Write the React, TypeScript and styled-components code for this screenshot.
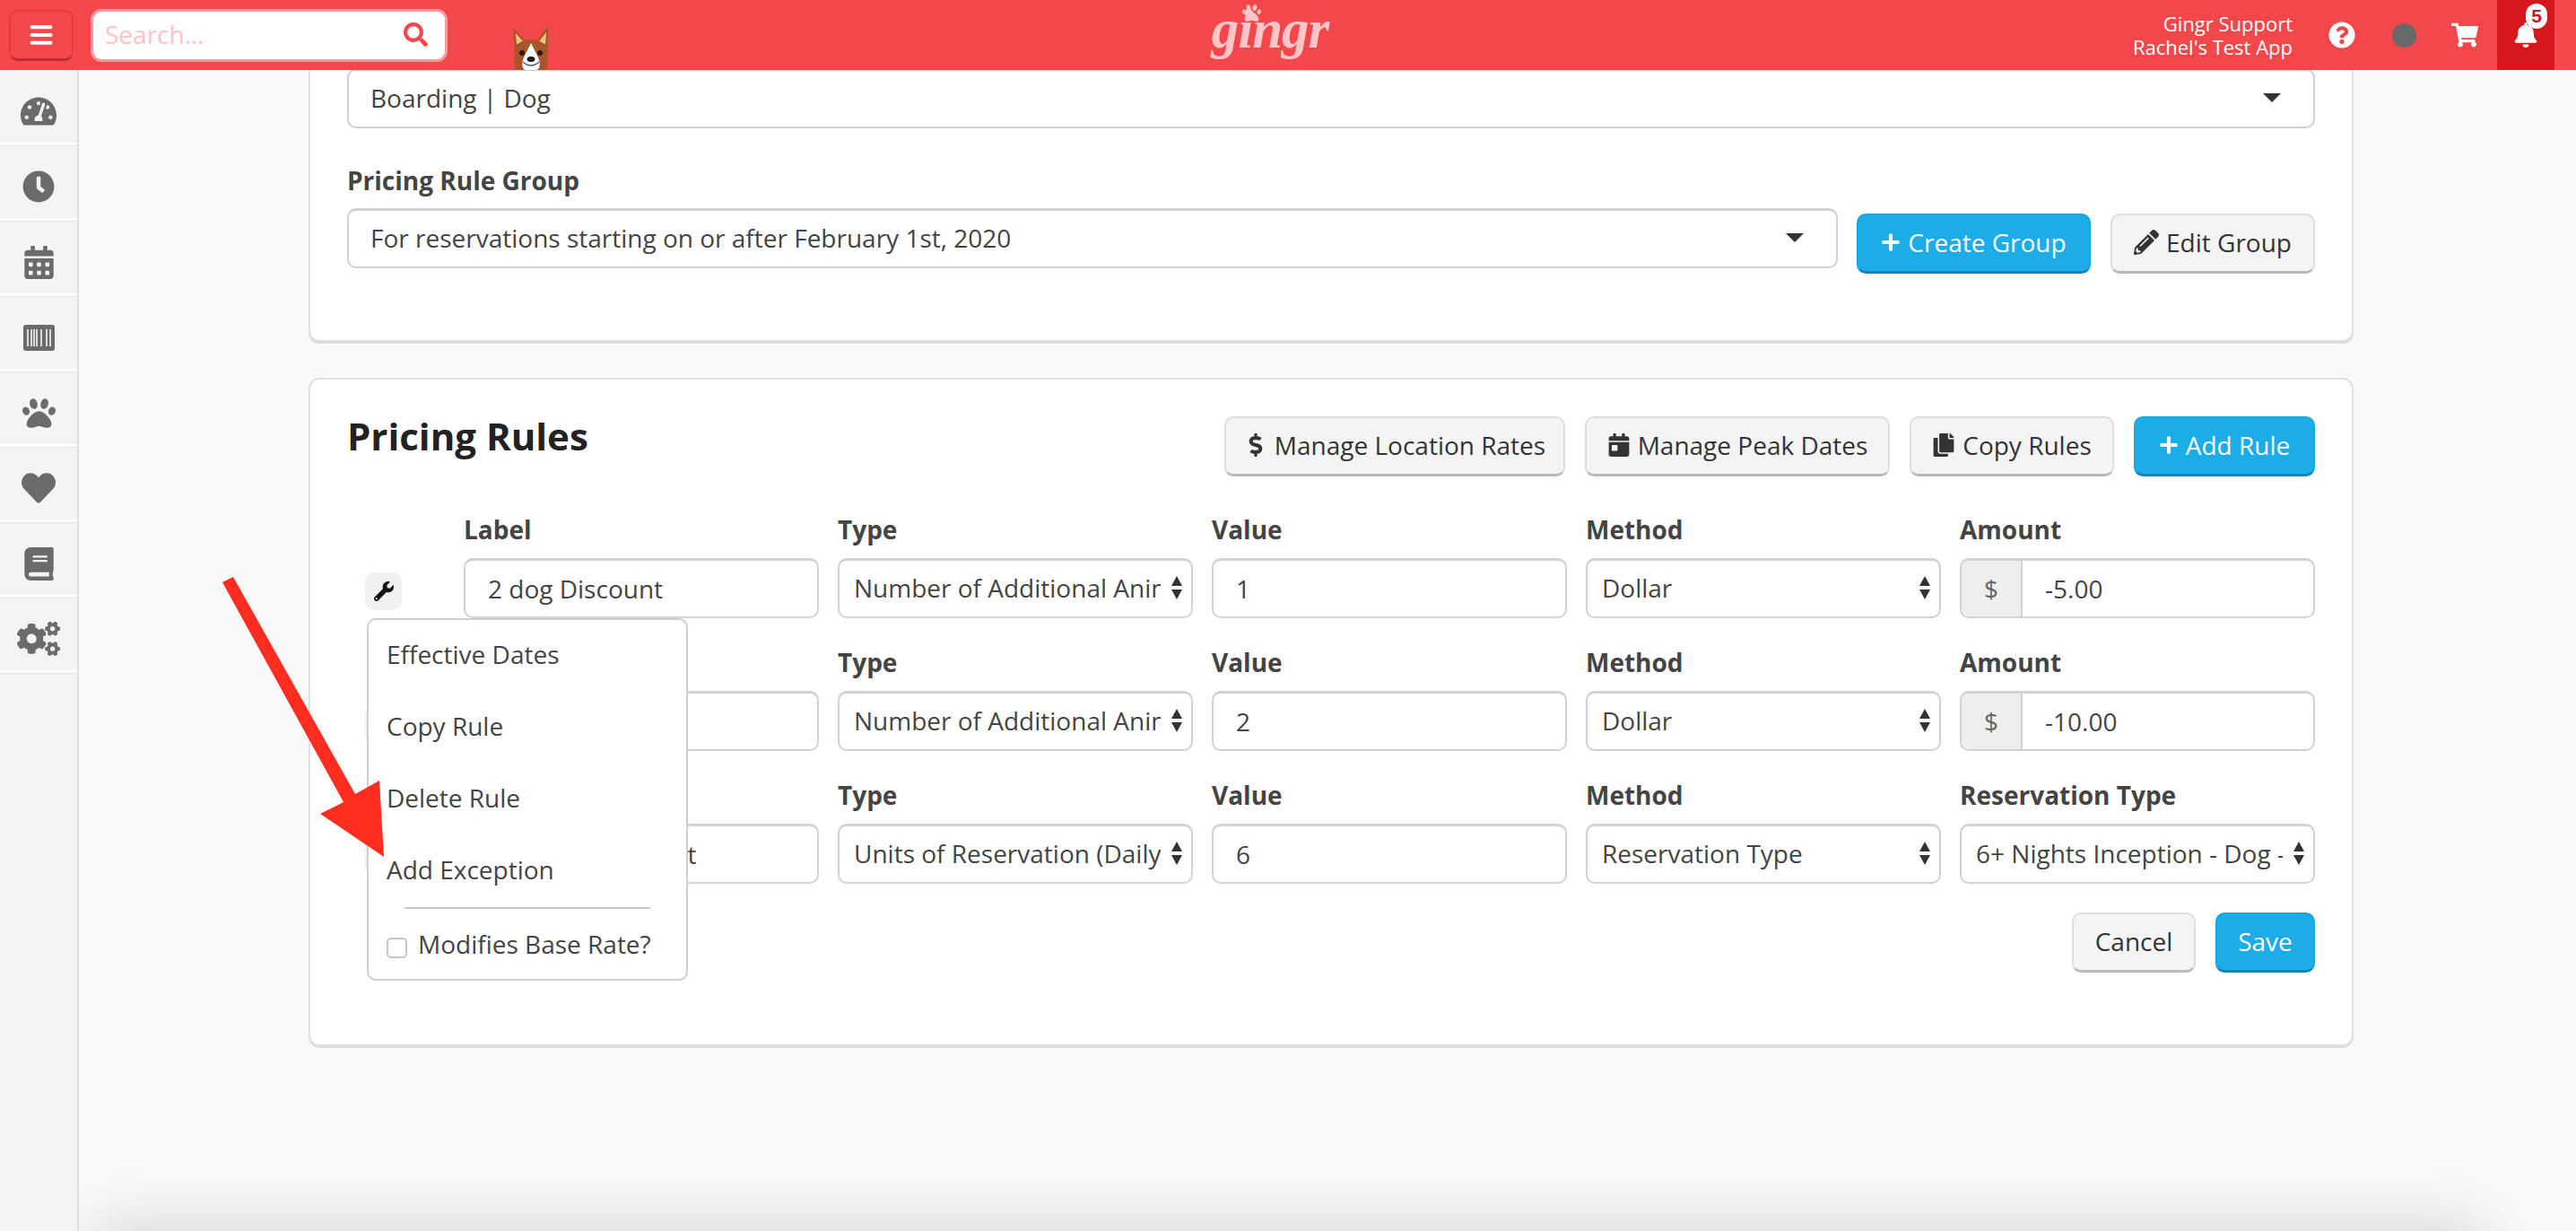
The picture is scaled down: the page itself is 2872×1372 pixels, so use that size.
import styled, { createGlobalStyle } from "styled-components";
import {
  FaBars,
  FaBell,
  FaBook,
  FaCalendarAlt,
  FaCalendarDay,
  FaClock,
  FaCogs,
  FaCopy,
  FaDollarSign,
  FaHeart,
  FaPaw,
  FaPencilAlt,
  FaPlus,
  FaQuestionCircle,
  FaSearch,
  FaShoppingCart,
  FaTachometerAlt,
  FaWrench,
} from "react-icons/fa";

const GlobalStyle = createGlobalStyle`
  html, body {
    margin: 0;
    padding: 0;
    height: 100%;
    overflow: hidden;
  }
  body {
    font-family: "Open Sans", "Liberation Sans", sans-serif;
    font-size: 28px;
    color: #444;
    background: #fafafa;
  }
  * { box-sizing: border-box; }
`;

const Page = styled.div`
  display: flex;
  flex-direction: column;
  height: 100vh;
  overflow: hidden;
  position: relative;
`;

const TopBar = styled.header`
  flex: 0 0 78px;
  display: flex;
  align-items: center;
  background: #f4474b;
  position: relative;
  z-index: 2;
`;

const MenuButton = styled.button`
  width: 72px;
  height: 57px;
  margin: 0 0 0 10px;
  padding: 0;
  display: flex;
  align-items: center;
  justify-content: center;
  background: #f4474b;
  color: #fff;
  border: 2px solid #e23c40;
  border-bottom: 3px solid #b92f33;
  border-radius: 10px;
`;

const SearchBox = styled.div`
  width: 398px;
  height: 59px;
  margin-left: 19px;
  padding: 0 19px 2px 13px;
  display: flex;
  align-items: center;
  justify-content: space-between;
  background: #fff;
  border: 3px solid #fb9a9d;
  border-radius: 12px;
  font-size: 28px;
  color: #ffc3c5;
`;

const DogSlot = styled.div`
  width: 44px;
  height: 50px;
  margin: 28px 0 0 71px;
`;

const Logo = styled.div`
  position: relative;
  margin-left: 736px;
  width: 132px;
  height: 78px;
  font-family: "Liberation Serif", serif;
  font-style: italic;
  font-weight: 700;
  font-size: 61px;
  line-height: 66px;
  color: #ffc5c7;
  text-align: center;
  letter-spacing: -1px;
`;

const LogoPaw = styled.span`
  position: absolute;
  left: 35px;
  top: 4px;
  font-size: 21px;
  line-height: 1;
`;

const UserBlock = styled.div`
  margin-left: auto;
  text-align: right;
  color: #fff;
  font-size: 22px;
  line-height: 26px;
`;

const TopIcon = styled.div<{ $left: number; $width: number }>`
  margin-left: ${(p) => p.$left}px;
  width: ${(p) => p.$width}px;
  display: flex;
  justify-content: center;
  color: #fff;
`;

const StatusDot = styled.div`
  width: 27px;
  height: 27px;
  margin-left: 41px;
  border-radius: 50%;
  background: #686868;
`;

const NotifyCell = styled.div`
  position: relative;
  width: 64px;
  height: 78px;
  margin: 0 24px 0 20px;
  display: flex;
  align-items: center;
  justify-content: center;
  background: #d5181e;
  color: #fff;
`;

const NotifyBadge = styled.span`
  position: absolute;
  left: 32px;
  top: 4px;
  width: 24px;
  height: 28px;
  border-radius: 12px;
  background: #fff;
  color: #c4161c;
  font-family: "Liberation Sans", sans-serif;
  font-weight: 700;
  font-size: 21px;
  line-height: 28px;
  text-align: center;
`;

const Body = styled.div`
  flex: 1;
  display: flex;
  min-height: 0;
`;

const Sidebar = styled.nav`
  flex: 0 0 88px;
  background: #f4f4f4;
  border-right: 2px solid #dedede;
`;

const SideItem = styled.div`
  height: 84px;
  padding-top: 11px;
  display: flex;
  align-items: center;
  justify-content: center;
  color: #6b6b6b;
  border-bottom: 3px solid #fff;
  box-shadow: 0 1px 0 #e4e4e4;
`;

const Main = styled.main`
  flex: 1;
  position: relative;
  overflow: hidden;
  padding-left: 256px;
  background: #fafafa;
`;

const Card = styled.section<{ $first?: boolean }>`
  width: 2280px;
  margin-top: ${(p) => (p.$first ? "-34px" : "40px")};
  padding: ${(p) => (p.$first ? "30px 41px 74px" : "41px 41px 80px")};
  background: #fff;
  border: 2px solid #e0e0e0;
  border-radius: 12px;
  box-shadow: 0 2px 0 #dcdcdc;
`;

const Box = styled.div`
  height: 67px;
  display: flex;
  align-items: center;
  background: #fff;
  border: 2px solid #d2d2d2;
  border-top-width: 3px;
  border-radius: 10px;
  color: #444;
  white-space: nowrap;
  overflow: hidden;
`;

const WideSelect = styled(Box)`
  flex: 1;
  padding: 0 36px 3px 24px;
  justify-content: space-between;
`;

const GroupLabel = styled.div`
  margin-top: 40px;
  height: 49px;
  font-weight: 700;
  line-height: 36px;
  color: #444;
`;

const GroupRow = styled.div`
  display: flex;
  gap: 21px;
`;

const ButtonRow = styled.div<{ $nudge?: number }>`
  display: flex;
  gap: 22px;
  padding-top: ${(p) => p.$nudge ?? 0}px;
`;

const Button = styled.button<{ $primary?: boolean; $width: number }>`
  width: ${(p) => p.$width}px;
  height: 67px;
  padding: 0 0 3px;
  display: flex;
  align-items: center;
  justify-content: center;
  gap: 8px;
  font-family: inherit;
  font-size: 28px;
  white-space: nowrap;
  color: ${(p) => (p.$primary ? "#fff" : "#333")};
  background: ${(p) => (p.$primary ? "#1cace8" : "#f4f4f4")};
  border: 2px solid ${(p) => (p.$primary ? "#1ca6df" : "#dedede")};
  border-bottom: 3px solid ${(p) => (p.$primary ? "#1487b8" : "#b9b9b9")};
  border-radius: 10px;
`;

const RulesHead = styled.div`
  display: flex;
  align-items: flex-start;
  justify-content: space-between;
  margin-bottom: 43px;
`;

const Title = styled.h2`
  margin: 0;
  font-size: 42px;
  line-height: 44px;
  font-weight: 700;
  color: #222;
`;

const RuleList = styled.div`
  display: flex;
  flex-direction: column;
  gap: 33px;
`;

const RuleRow = styled.div`
  position: relative;
  display: grid;
  grid-template-columns: 109px repeat(5, 396px);
  column-gap: 21px;
  align-items: end;
`;

const WrenchButton = styled.div`
  width: 41px;
  height: 42px;
  margin: 0 0 9px 20px;
  display: flex;
  align-items: center;
  justify-content: center;
  background: #f1f1f1;
  border-radius: 10px;
  color: #111;
`;

const Field = styled.div`
  display: flex;
  flex-direction: column;
  gap: 10px;
`;

const FieldLabel = styled.div`
  height: 38px;
  font-weight: 700;
  font-size: 28px;
  line-height: 33px;
  color: #444;
`;

const TextInput = styled(Box)`
  padding-left: 25px;
`;

const SelectBox = styled(Box)`
  position: relative;
  padding: 0 34px 3px 16px;
`;

const SelectText = styled.span`
  flex: 1;
  min-width: 0;
  overflow: hidden;
`;

const SelectArrows = styled.svg`
  position: absolute;
  right: 9px;
  top: 17px;
`;

const AmountBox = styled(Box)`
  padding-right: 20px;
`;

const Addon = styled.span`
  flex: 0 0 68px;
  align-self: stretch;
  display: flex;
  align-items: center;
  justify-content: center;
  margin-right: 25px;
  background: #eee;
  border-right: 2px solid #d2d2d2;
  color: #666;
`;

const FormActions = styled.div`
  display: flex;
  justify-content: flex-end;
  margin-top: 32px;
`;

const RuleMenu = styled.div`
  position: absolute;
  left: 22px;
  top: 115px;
  z-index: 1;
  width: 358px;
  height: 404px;
  padding: 0 20px;
  background: #fff;
  border: 2px solid #cfcfcf;
  border-radius: 10px;
`;

const MenuItem = styled.div`
  height: 80px;
  padding-bottom: 4px;
  display: flex;
  align-items: center;
  color: #444;
`;

const MenuDivider = styled.div`
  height: 2px;
  margin: 0 20px 0 20px;
  background: #c9c9c9;
`;

const CheckRow = styled.label`
  display: flex;
  align-items: center;
  gap: 12px;
  height: 78px;
  color: #444;
`;

const CheckBox = styled.span`
  flex: 0 0 23px;
  height: 23px;
  margin-top: 8px;
  background: #fff;
  border: 2px solid #c6c6c6;
  border-radius: 5px;
`;

const BottomShade = styled.div`
  position: absolute;
  left: 24px;
  right: 110px;
  bottom: -50px;
  height: 50px;
  box-shadow: 0 0 70px 10px rgba(0, 0, 0, 0.14);
`;

const Annotation = styled.svg`
  position: absolute;
  left: 0;
  top: 0;
  z-index: 3;
  pointer-events: none;
`;

function UpDown() {
  return (
    <SelectArrows width="14" height="26" viewBox="0 0 14 26">
      <path d="M7 0 L13 11 H1 Z M1 15 H13 L7 26 Z" fill="#333" />
    </SelectArrows>
  );
}

function Caret() {
  return (
    <svg width="20" height="10" viewBox="0 0 20 10">
      <path d="M0 0 H20 L10 10 Z" fill="#333" />
    </svg>
  );
}

function BarcodeIcon() {
  return (
    <svg width="35" height="29" viewBox="0 0 35 29">
      <rect width="35" height="29" rx="3" fill="#6b6b6b" />
      <path d="M5 5 V24 M9 5 V24 M12 5 V24 M15 5 V24 M20 5 V24 M26 5 V24 M30 5 V24" stroke="#f4f4f4" strokeWidth="1.6" />
    </svg>
  );
}

function DogHead() {
  return (
    <svg width="44" height="50" viewBox="0 0 44 50">
      <path d="M4 32 L2 3 L15 17 H29 L41 1 L41 32 Z" fill="#a9552a" />
      <path d="M6 22 L5 9 L13 18 Z M38 22 L39 8 L31 18 Z" fill="#f0bd86" />
      <path d="M3 24 Q22 8 41 24 L40 50 H4 Z" fill="#a9552a" />
      <path d="M22 20 L14 36 Q10 46 15 50 H29 Q34 46 30 36 Z" fill="#fff" />
      <circle cx="12" cy="31" r="3" fill="#2a1a12" />
      <circle cx="32" cy="31" r="3" fill="#2a1a12" />
      <ellipse cx="22" cy="38" rx="4.5" ry="3" fill="#1c1c1c" />
      <path d="M13 41 Q22 49 31 41" stroke="#555" strokeWidth="1.2" fill="none" />
    </svg>
  );
}

function ClosedSelect({ value }: { value: string }) {
  return (
    <SelectBox>
      <SelectText>{value}</SelectText>
      <UpDown />
    </SelectBox>
  );
}

const rules = [
  { label: "2 dog Discount", type: "Number of Additional Animals", value: "1", method: "Dollar", amount: "-5.00" },
  { label: "3 dog Discount", type: "Number of Additional Animals", value: "2", method: "Dollar", amount: "-10.00" },
  { label: "6+ Night Discount", type: "Units of Reservation (Daily)", value: "6", method: "Reservation Type" },
];

const sideIcons = [
  <FaTachometerAlt size={40} />,
  <FaClock size={36} />,
  <FaCalendarAlt size={37} />,
  <BarcodeIcon />,
  <FaPaw size={37} />,
  <FaHeart size={38} />,
  <FaBook size={37} />,
  <FaCogs size={48} />,
];

export default function App() {
  return (
    <Page>
      <GlobalStyle />
      <TopBar>
        <MenuButton>
          <FaBars size={28} />
        </MenuButton>
        <SearchBox>
          Search...
          <FaSearch size={27} color="#f4474b" />
        </SearchBox>
        <DogSlot>
          <DogHead />
        </DogSlot>
        <Logo>
          <LogoPaw>
            <FaPaw />
          </LogoPaw>
          gingr
        </Logo>
        <UserBlock>
          <div>Gingr Support</div>
          <div>Rachel's Test App</div>
        </UserBlock>
        <TopIcon $left={40} $width={30}>
          <FaQuestionCircle size={30} />
        </TopIcon>
        <StatusDot />
        <TopIcon $left={38} $width={32}>
          <FaShoppingCart size={30} />
        </TopIcon>
        <NotifyCell>
          <FaBell size={28} />
          <NotifyBadge>5</NotifyBadge>
        </NotifyCell>
      </TopBar>
      <Body>
        <Sidebar>
          {sideIcons.map((icon, i) => (
            <SideItem key={i}>{icon}</SideItem>
          ))}
        </Sidebar>
        <Main>
          <Card $first>
            <WideSelect>
              Boarding | Dog
              <Caret />
            </WideSelect>
            <GroupLabel>Pricing Rule Group</GroupLabel>
            <GroupRow>
              <WideSelect>
                For reservations starting on or after February 1st, 2020
                <Caret />
              </WideSelect>
              <ButtonRow $nudge={6}>
                <Button $primary $width={261}>
                  <FaPlus size={22} /> Create Group
                </Button>
                <Button $width={228}>
                  <FaPencilAlt size={28} /> Edit Group
                </Button>
              </ButtonRow>
            </GroupRow>
          </Card>
          <Card>
            <RulesHead>
              <Title>Pricing Rules</Title>
              <ButtonRow>
                <Button $width={380}>
                  <FaDollarSign size={26} /> Manage Location Rates
                </Button>
                <Button $width={340}>
                  <FaCalendarDay size={26} /> Manage Peak Dates
                </Button>
                <Button $width={228}>
                  <FaCopy size={26} /> Copy Rules
                </Button>
                <Button $primary $width={202}>
                  <FaPlus size={22} /> Add Rule
                </Button>
              </ButtonRow>
            </RulesHead>
            <RuleList>
              {rules.map((rule, i) => (
                <RuleRow key={rule.value}>
                  <WrenchButton>
                    <FaWrench size={22} />
                  </WrenchButton>
                  <Field>
                    <FieldLabel>Label</FieldLabel>
                    <TextInput>{rule.label}</TextInput>
                  </Field>
                  <Field>
                    <FieldLabel>Type</FieldLabel>
                    <ClosedSelect value={rule.type} />
                  </Field>
                  <Field>
                    <FieldLabel>Value</FieldLabel>
                    <TextInput>{rule.value}</TextInput>
                  </Field>
                  <Field>
                    <FieldLabel>Method</FieldLabel>
                    <ClosedSelect value={rule.method} />
                  </Field>
                  {rule.amount ? (
                    <Field>
                      <FieldLabel>Amount</FieldLabel>
                      <AmountBox>
                        <Addon>$</Addon>
                        {rule.amount}
                      </AmountBox>
                    </Field>
                  ) : (
                    <Field>
                      <FieldLabel>Reservation Type</FieldLabel>
                      <ClosedSelect value="6+ Nights Inception - Dog - Standard" />
                    </Field>
                  )}
                  {i === 0 && (
                    <RuleMenu>
                      <MenuItem>Effective Dates</MenuItem>
                      <MenuItem>Copy Rule</MenuItem>
                      <MenuItem>Delete Rule</MenuItem>
                      <MenuItem>Add Exception</MenuItem>
                      <MenuDivider />
                      <CheckRow>
                        <CheckBox />
                        Modifies Base Rate?
                      </CheckRow>
                    </RuleMenu>
                  )}
                </RuleRow>
              ))}
            </RuleList>
            <FormActions>
              <ButtonRow>
                <Button $width={138}>Cancel</Button>
                <Button $primary $width={111}>
                  Save
                </Button>
              </ButtonRow>
            </FormActions>
          </Card>
          <BottomShade />
        </Main>
      </Body>
      <Annotation width="2872" height="1372" viewBox="0 0 2872 1372">
        <path d="M248 649 L260 643 L396 885 L423 870 L428 955 L357 907 L383 894 Z" fill="#ff2d20" />
      </Annotation>
    </Page>
  );
}
